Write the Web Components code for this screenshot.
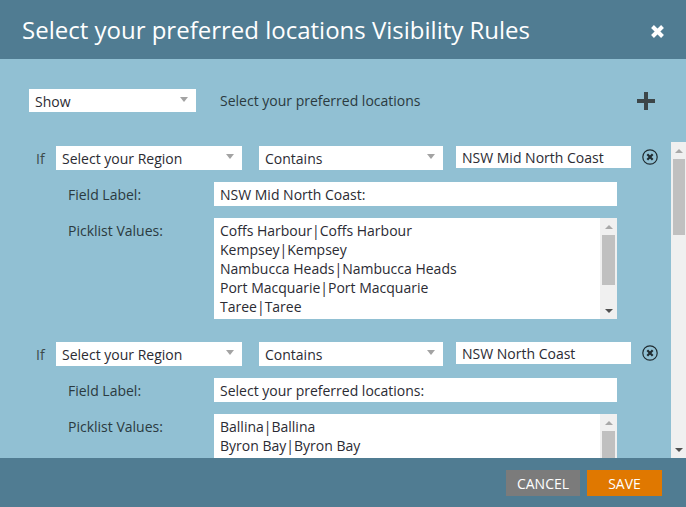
<!DOCTYPE html>
<html>
<head>
<meta charset="utf-8">
<title>Visibility Rules</title>
<style>
html, body { margin: 0; height: 100%; overflow: hidden; }
body { font-family: "Open Sans", "Liberation Sans", sans-serif; font-size: 14px; color: #2b2b33; background: #91c0d3; }
</style>
</head>
<body>
<rule-dialog title-text="Select your preferred locations Visibility Rules">
  <rule-head label="Select your preferred locations" value="Show"></rule-head>
  <rule-row slot="rules" region="NSW Mid North Coast" label="NSW Mid North Coast:">
    <div>Coffs Harbour|Coffs Harbour</div>
    <div>Kempsey|Kempsey</div>
    <div>Nambucca Heads|Nambucca Heads</div>
    <div>Port Macquarie|Port Macquarie</div>
    <div>Taree|Taree</div>
  </rule-row>
  <rule-row slot="rules" region="NSW North Coast" label="Select your preferred locations:">
    <div>Ballina|Ballina</div>
    <div>Byron Bay|Byron Bay</div>
  </rule-row>
</rule-dialog>

<script>
class RuleSelect extends HTMLElement {
    constructor() {
        super();
        this.attachShadow({ mode: "open" }).innerHTML = /*html*/`
            <style>
            :host { display: flex; align-items: center; box-sizing: border-box; height: 24px; padding: 0 6px; background: #fff; justify-content: space-between; }
            i { width: 0; height: 0; border: 4px solid transparent; border-top: 5px solid #a3a3a3; border-left-width: 4.5px; border-right-width: 4.5px; border-bottom: 0; margin: -3px 2px 0 0; }
            </style>
            <span>${this.getAttribute("value")}</span><i></i>`;
    }
}
customElements.define("rule-select", RuleSelect);

class RuleScrollbar extends HTMLElement {
    constructor() {
        super();
        this.attachShadow({ mode: "open" }).innerHTML = /*html*/`
            <style>
            :host { display: flex; flex-direction: column; align-items: stretch; box-sizing: border-box; background: #f0f0f0; width: 17px; flex: none; padding: 0 2px; }
            .btn { height: 17px; flex: none; display: flex; align-items: center; justify-content: center; }
            .up { width: 0; height: 0; border-left: 4px solid transparent; border-right: 4px solid transparent; border-bottom: 4px solid #a8a8a8; }
            .down { width: 0; height: 0; border-left: 4px solid transparent; border-right: 4px solid transparent; border-top: 4px solid #505050; }
            .thumb { background: #c0c0c0; flex: none; height: var(--thumb, 50px); }
            .gap { flex: 1; }
            </style>
            <div class="btn"><div class="up"></div></div>
            <div class="thumb"></div>
            <div class="gap"></div>
            <div class="btn"><div class="down"></div></div>`;
    }
}
customElements.define("rule-scrollbar", RuleScrollbar);

class RuleRow extends HTMLElement {
    constructor() {
        super();
        this.attachShadow({ mode: "open" }).innerHTML = /*html*/`
            <style>
            :host { display: block; padding-bottom: 23px; }
            .top { display: flex; align-items: flex-start; height: 24px; }
            .if { width: 20px; margin-left: 36px; height: 24px; line-height: 26px; color: #3d4a4a; }
            .region { width: 186px; }
            .op { width: 184px; margin-left: 17px; }
            .value { width: 175px; height: 22px; line-height: 23px; margin-left: 13px; padding-left: 6px; box-sizing: border-box; background: #fff; }
            .remove { margin: 3px 0 0 11px; }
            .line { display: flex; align-items: flex-start; margin: 12px 0 0 68px; }
            .line label { width: 146px; flex: none; height: 24px; line-height: 26px; color: #2b3a40; }
            .box { width: 403px; box-sizing: border-box; background: #fff; }
            .field { height: 24px; line-height: 25px; padding-left: 6px; }
            .picklist { height: 101px; display: flex; }
            .items { flex: 1; padding: 3px 6px; line-height: 19px; overflow: hidden; }
            rule-scrollbar { --thumb: 50px; }
            </style>
            <div class="top">
                <span class="if">If</span>
                <rule-select class="region" value="Select your Region"></rule-select>
                <rule-select class="op" value="Contains"></rule-select>
                <div class="value">${this.getAttribute("region")}</div>
                <svg class="remove" width="16" height="16" viewBox="0 0 16 16">
                    <circle cx="8" cy="8" r="7.2" fill="none" stroke="#1f2b30" stroke-width="1.2"/>
                    <path d="M5.3 5.3l5.4 5.4M10.7 5.3l-5.4 5.4" stroke="#1f2b30" stroke-width="2.2" fill="none"/>
                </svg>
            </div>
            <div class="line">
                <label>Field Label:</label>
                <div class="box field">${this.getAttribute("label")}</div>
            </div>
            <div class="line">
                <label>Picklist Values:</label>
                <div class="box picklist">
                    <div class="items"><slot></slot></div>
                    <rule-scrollbar></rule-scrollbar>
                </div>
            </div>`;
    }
}
customElements.define("rule-row", RuleRow);

class RuleHead extends HTMLElement {
    constructor() {
        super();
        this.attachShadow({ mode: "open" }).innerHTML = /*html*/`
            <style>
            :host { display: flex; align-items: center; height: 23px; padding: 30px 31px 30px 29px; }
            rule-select { width: 167px; height: 23px; padding-top: 1px; }
            span { margin-left: 24px; flex: 1; color: #2b3a40; }
            </style>
            <rule-select value="${this.getAttribute("value")}"></rule-select>
            <span>${this.getAttribute("label")}</span>
            <svg width="18" height="18" viewBox="0 0 18 18"><path d="M7 0h4v7h7v4h-7v7H7v-7H0V7h7z" fill="#3c4649"/></svg>`;
    }
}
customElements.define("rule-head", RuleHead);

class RuleDialog extends HTMLElement {
    constructor() {
        super();
        this.attachShadow({ mode: "open" }).innerHTML = /*html*/`
            <style>
            :host { display: flex; flex-direction: column; height: 507px; width: 686px; background: #91c0d3; }
            header { flex: none; height: 59px; background: #507c92; color: #fff; display: flex; align-items: center; justify-content: space-between; padding: 0 21px 0 22px; font-size: 24px; }
            header svg { margin-top: 4px; }
            .scroll { flex: 1; display: flex; min-height: 0; }
            .rules { flex: 1; padding-top: 4px; overflow: hidden; }
            .scroll rule-scrollbar { width: 15px; --thumb: 76px; padding: 0 1px 0 2px; }
            footer { flex: none; height: 49px; background: #507c92; display: flex; justify-content: flex-end; align-items: flex-start; gap: 7px; padding: 12px 24px 0 0; box-sizing: border-box; }
            button { border: 0; height: 26px; padding: 0; font: 14px "Open Sans", "Liberation Sans", sans-serif; color: #fff; }
            .cancel { width: 74px; background: #7b7b7b; }
            .save { width: 75px; background: #e07800; }
            </style>
            <header>
                <span>${this.getAttribute("title-text")}</span>
                <svg width="15" height="15" viewBox="0 0 15 15"><path d="M2.5 2.5l10 10M12.5 2.5l-10 10" stroke="#fff" stroke-width="4" fill="none"/></svg>
            </header>
            <slot></slot>
            <div class="scroll">
                <div class="rules"><slot name="rules"></slot></div>
                <rule-scrollbar></rule-scrollbar>
            </div>
            <footer>
                <button class="cancel">CANCEL</button>
                <button class="save">SAVE</button>
            </footer>`;
    }
}
customElements.define("rule-dialog", RuleDialog);
</script>
</body>
</html>
